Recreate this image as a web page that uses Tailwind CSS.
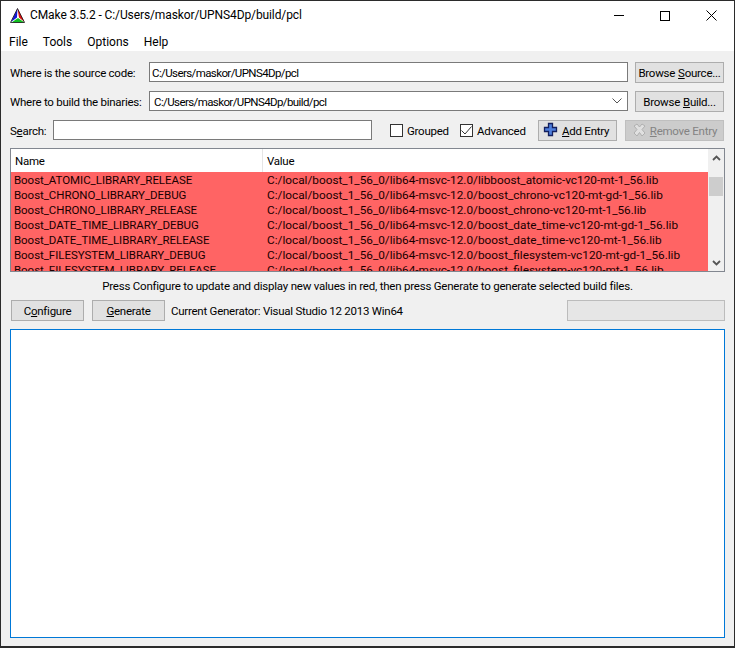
<!DOCTYPE html>
<html lang="en">
<head>
  <meta charset="UTF-8" />
  <title>CMake 3.5.2</title>
  <script src="https://cdn.jsdelivr.net/npm/@tailwindcss/browser@4"></script>
</head>
<body class="m-0 bg-[#f0f0f0]">
  <div class="w-[735px] h-[648px] flex flex-col border border-[#2b2b2b] border-b-2 bg-[#f0f0f0] overflow-hidden font-['Roboto',sans-serif] text-[11.5px] tracking-[-0.25px] text-[#000] leading-[15px]">

    <!-- title bar -->
    <div class="h-[29px] shrink-0 bg-white flex items-center pl-[9px]">
      <svg width="16" height="16" viewBox="0 0 16 16" class="shrink-0">
        <polygon points="7.500,0.500 1,14 7,9.500" fill="#1414d8" />
        <polygon points="7.500,0.500 14.500,14 9,9.500" fill="#e01010" />
        <polygon points="8,10 1.500,14.500 14.500,14.500" fill="#10c020" />
        <path d="M7.500.5L.5 14.500h14z" fill="none" stroke="#111" stroke-width=".8" />
      </svg>
      <span class="ml-[4px] text-[12px] tracking-[-0.1px] whitespace-nowrap">CMake 3.5.2 - C:/Users/maskor/UPNS4Dp/build/pcl</span>
      <div class="ml-auto flex items-center h-full">
        <div class="w-[46px] h-full flex items-center justify-center"><div class="w-[10px] h-px bg-black"></div></div>
        <div class="w-[46px] h-full flex items-center justify-center"><div class="w-[10px] h-[10px] border border-black"></div></div>
        <div class="w-[46px] h-full flex items-center justify-center">
          <svg width="11" height="11" viewBox="0 0 11 11"><path d="M.5.5l10 10M10.500.5l-10 10" stroke="#000" fill="none" /></svg>
        </div>
      </div>
    </div>

    <!-- menu bar -->
    <div class="h-[21px] shrink-0 bg-white flex items-center pl-[8px] gap-[15px] text-[12px] tracking-normal pt-[4px]">
      <span>File</span><span>Tools</span><span>Options</span><span>Help</span>
    </div>

    <div class="flex-1 flex flex-col pl-[9px] pr-[9px] pt-[11px] pb-[8px]">
      <!-- source row -->
      <div class="flex items-center h-[20px]">
        <span class="w-[139px] shrink-0 whitespace-nowrap pt-[2px]">Where is the source code:</span>
        <div class="w-[479px] shrink-0 h-[20px] bg-white border border-[#7a7a7a] pl-[2px] pt-[2px] flex items-center tracking-[-0.6px]">C:/Users/maskor/UPNS4Dp/pcl</div>
        <div class="ml-[7px] w-[89px] shrink-0 h-[21px] bg-[#e1e1e1] border border-[#adadad] pt-[2px] flex items-center justify-center whitespace-nowrap">Browse <span class="underline ml-[3px]">S</span>ource...</div>
      </div>
      <!-- build row -->
      <div class="flex items-center h-[20px] mt-[9px]">
        <span class="w-[139px] shrink-0 whitespace-nowrap pt-[2px]">Where to build the binaries:</span>
        <div class="w-[479px] shrink-0 h-[20px] bg-white border border-[#7a7a7a] pl-[4px] pr-[5px] flex items-center justify-between">
          <span class="pt-[2px] tracking-[-0.6px]">C:/Users/maskor/UPNS4Dp/build/pcl</span>
          <svg width="10" height="6" viewBox="0 0 10 6"><path d="M.5.5L5 5 9.500.5" stroke="#555" fill="none" /></svg>
        </div>
        <div class="ml-[7px] w-[89px] shrink-0 h-[21px] bg-[#e1e1e1] border border-[#adadad] pt-[2px] flex items-center justify-center whitespace-nowrap">Browse <span class="underline ml-[3px]">B</span>uild...</div>
      </div>
      <!-- search row -->
      <div class="flex items-center h-[20px] mt-[9px]">
        <span class="w-[43px] shrink-0 pt-[3px]">S<span class="underline">e</span>arch:</span>
        <div class="w-[319px] shrink-0 h-[20px] bg-white border border-[#7a7a7a]"></div>
        <div class="ml-[18px] w-[13px] h-[13px] shrink-0 bg-white border border-[#333]"></div>
        <span class="ml-[4px] w-[53px] shrink-0 pt-[3px]">Grouped</span>
        <div class="w-[13px] h-[13px] shrink-0 bg-white border border-[#333] flex items-center justify-center">
          <svg width="11" height="9" viewBox="0 0 11 9"><path d="M.5 4.500L4 8 10.500.5" stroke="#333" fill="none" /></svg>
        </div>
        <span class="ml-[4px] w-[61px] shrink-0 pt-[3px]">Advanced</span>
        <div class="w-[79px] h-[21px] shrink-0 bg-[#e1e1e1] border border-[#adadad] pl-[4px] flex items-center whitespace-nowrap">
          <svg width="15" height="15" viewBox="0 0 15 15" class="mr-[4px] -mt-[2px]"><path d="M5.500 1.500h4v4h4v4h-4v4h-4v-4h-4v-4h4z" fill="#4f7fdc" stroke="#14205e" stroke-width="1.300" /></svg>
          <span class="pt-[2px]"><span class="underline">A</span>dd Entry</span>
        </div>
        <div class="ml-[8px] w-[99px] h-[21px] shrink-0 bg-[#cccccc] border border-[#bfbfbf] flex items-center justify-center whitespace-nowrap text-[#838383]">
          <svg width="15" height="14" viewBox="0 0 15 14" class="mr-[3px]"><path d="M2 3l3-2 2.500 3L10 1l3 2-3 3.500L13 10l-3 3-2.500-3.500L5 13l-3-3 3-3.500z" fill="#e0e0e0" stroke="#b0b0b0" /></svg>
          <span class="pt-[2px]"><span class="underline">R</span>emove Entry</span>
        </div>
      </div>

      <!-- cache table -->
      <div class="mt-[8px] w-[715px] h-[124px] bg-white border border-[#828790] flex overflow-hidden shrink-0">
        <div class="flex-1 min-w-0 flex flex-col">
          <div class="h-[23px] shrink-0 flex items-center bg-white">
            <div class="w-[252px] h-full border-r border-[#e5e5e5] pl-[4px] pt-[2px] flex items-center">Name</div>
            <div class="pl-[4px] pt-[2px]">Value</div>
          </div>
          <div class="bg-[#ff6464] text-[#1a0000] flex-1 overflow-hidden pt-px tracking-normal">
            <div class="flex h-[15px] whitespace-nowrap"><div class="w-[253px] pl-[3px] tracking-[-0.05px]">Boost_ATOMIC_LIBRARY_RELEASE</div><div class="pl-[3px] text-[11.8px]">C:/local/boost_1_56_0/lib64-msvc-12.0/libboost_atomic-vc120-mt-1_56.lib</div></div>
            <div class="flex h-[15px] whitespace-nowrap"><div class="w-[253px] pl-[3px] tracking-[-0.05px]">Boost_CHRONO_LIBRARY_DEBUG</div><div class="pl-[3px] text-[11.8px]">C:/local/boost_1_56_0/lib64-msvc-12.0/boost_chrono-vc120-mt-gd-1_56.lib</div></div>
            <div class="flex h-[15px] whitespace-nowrap"><div class="w-[253px] pl-[3px] tracking-[-0.05px]">Boost_CHRONO_LIBRARY_RELEASE</div><div class="pl-[3px] text-[11.8px]">C:/local/boost_1_56_0/lib64-msvc-12.0/boost_chrono-vc120-mt-1_56.lib</div></div>
            <div class="flex h-[15px] whitespace-nowrap"><div class="w-[253px] pl-[3px] tracking-[-0.05px]">Boost_DATE_TIME_LIBRARY_DEBUG</div><div class="pl-[3px] text-[11.8px]">C:/local/boost_1_56_0/lib64-msvc-12.0/boost_date_time-vc120-mt-gd-1_56.lib</div></div>
            <div class="flex h-[15px] whitespace-nowrap"><div class="w-[253px] pl-[3px] tracking-[-0.05px]">Boost_DATE_TIME_LIBRARY_RELEASE</div><div class="pl-[3px] text-[11.8px]">C:/local/boost_1_56_0/lib64-msvc-12.0/boost_date_time-vc120-mt-1_56.lib</div></div>
            <div class="flex h-[15px] whitespace-nowrap"><div class="w-[253px] pl-[3px] tracking-[-0.05px]">Boost_FILESYSTEM_LIBRARY_DEBUG</div><div class="pl-[3px] text-[11.8px]">C:/local/boost_1_56_0/lib64-msvc-12.0/boost_filesystem-vc120-mt-gd-1_56.lib</div></div>
            <div class="flex h-[15px] whitespace-nowrap"><div class="w-[253px] pl-[3px] tracking-[-0.05px]">Boost_FILESYSTEM_LIBRARY_RELEASE</div><div class="pl-[3px] text-[11.8px]">C:/local/boost_1_56_0/lib64-msvc-12.0/boost_filesystem-vc120-mt-1_56.lib</div></div>
          </div>
        </div>
        <!-- scrollbar -->
        <div class="w-[16px] shrink-0 bg-[#f0f0f0] flex flex-col items-center">
          <div class="h-[17px] flex items-center justify-center shrink-0"><svg width="9" height="6" viewBox="0 0 9 6"><path d="M1 5l3.500-3.500L8 5" stroke="#555" stroke-width="1.800" fill="none" /></svg></div>
          <div class="w-[14px] h-[19px] mt-[11px] bg-[#cdcdcd]"></div>
          <div class="mt-auto h-[17px] flex items-center justify-center shrink-0"><svg width="9" height="6" viewBox="0 0 9 6"><path d="M1 1l3.500 3.500L8 1" stroke="#555" stroke-width="1.800" fill="none" /></svg></div>
        </div>
      </div>

      <div class="h-[28px] shrink-0 flex items-center justify-center whitespace-nowrap tracking-[-0.22px]">Press Configure to update and display new values in red, then press Generate to generate selected build files.</div>

      <!-- action row -->
      <div class="flex items-center h-[21px] shrink-0">
        <div class="ml-[1px] w-[73px] h-[21px] bg-[#e1e1e1] border border-[#adadad] pt-[2px] flex items-center justify-center"><span>C<span class="underline">o</span>nfigure</span></div>
        <div class="ml-[8px] w-[73px] h-[21px] bg-[#e1e1e1] border border-[#adadad] pt-[2px] flex items-center justify-center"><span><span class="underline">G</span>enerate</span></div>
        <span class="ml-[6px] whitespace-nowrap pt-[2px]">Current Generator: Visual Studio 12 2013 Win64</span>
        <div class="ml-auto w-[158px] h-[21px] bg-[#e6e6e6] border border-[#bcbcbc]"></div>
      </div>

      <!-- output -->
      <div class="mt-[8px] flex-1 bg-white border border-[#0078d7] w-[715px]"></div>
    </div>
  </div>
</body>
</html>
